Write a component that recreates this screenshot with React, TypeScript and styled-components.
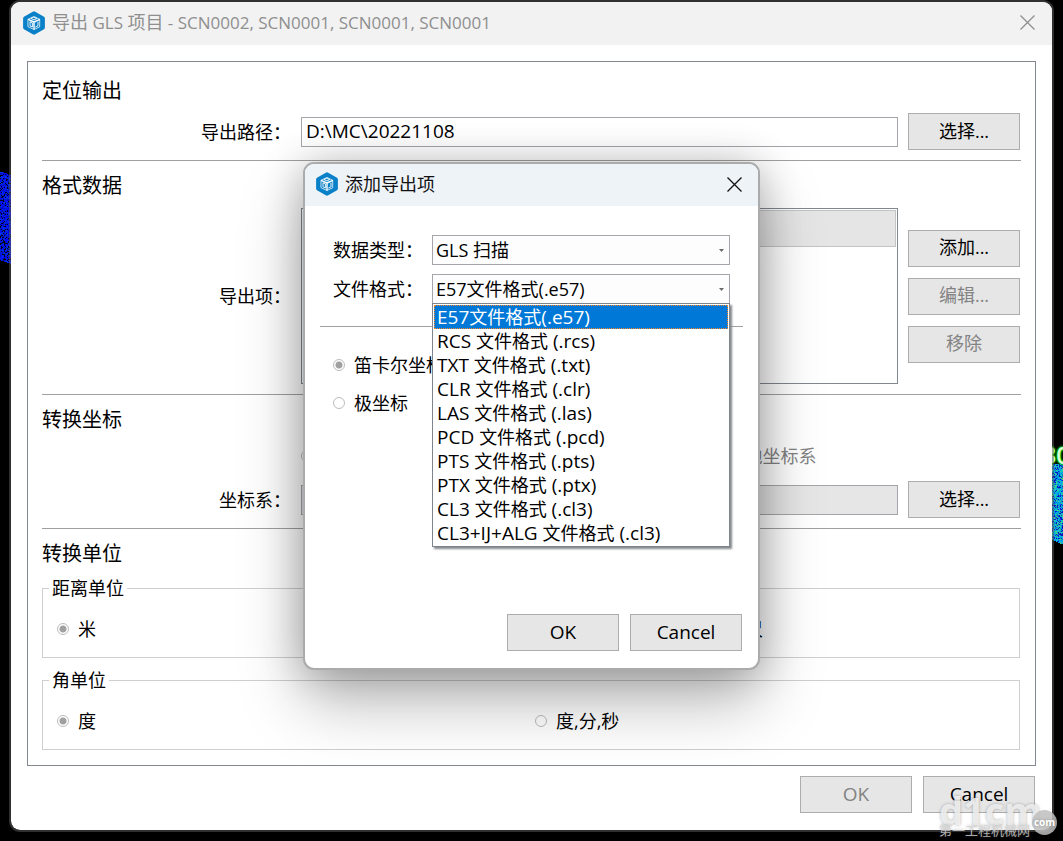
import React from "react";
import styled, { createGlobalStyle, css } from "styled-components";

const GlobalStyle = createGlobalStyle`
  *, *::before, *::after { box-sizing: border-box; }
  body {
    margin: 0;
    background: #000;
    color: #000;
    font-family: "Open Sans", "Noto Sans CJK SC", sans-serif;
    font-size: 18px;
    line-height: 28px;
  }
`;

/* ---------- text ---------- */

const Latin = styled.span<{ $small?: boolean }>`
  font-size: ${(p) => (p.$small ? 17 : 19)}px;
`;

/* Latin runs are set in their own size beside the Chinese characters. */
function Mixed({ text, small }: { text: string; small?: boolean }) {
  const runs = text.match(/[\x20-\x7e]+|[^\x20-\x7e]+/g) ?? [];
  return (
    <span>
      {runs.map((run, i) =>
        /^[\x20-\x7e]/.test(run) ? (
          <Latin key={i} $small={small}>
            {run}
          </Latin>
        ) : (
          run
        )
      )}
    </span>
  );
}

/* ---------- desktop ---------- */

const Desktop = styled.div`
  position: relative;
  min-height: 100vh;
  padding: 0 9px 9px;
  background: #000;
  overflow: hidden;
`;

const CloudStrip = styled.svg<{ $side: "left" | "right"; $top: number }>`
  position: absolute;
  top: ${(p) => p.$top}px;
  ${(p) => p.$side}: 0;
  display: block;
`;

const CloudLabel = styled.span`
  position: absolute;
  top: 441px;
  right: -7px;
  font-size: 24px;
  font-weight: 600;
  color: #d4ffd4;
  text-shadow: 0 0 2px #0d0, 0 0 2px #0d0, 0 0 3px #0d0;
`;

function PointCloud({
  side,
  top,
  height,
  colors,
  seed,
  slope,
}: {
  side: "left" | "right";
  top: number;
  height: number;
  colors: string[];
  seed: number;
  slope: number;
}) {
  const width = 11;
  const points: React.ReactNode[] = [];
  let s = seed;
  for (let y = 0; y < height; y++) {
    for (let x = 0; x < width; x++) {
      s = (s * 1103515245 + 12345) % 2147483648;
      const lean = Math.floor(x * slope);
      if (y < (side === "left" ? lean : 0) || y > height - 5 + lean) continue;
      const color = colors[Math.floor((s / 2147483648) * colors.length)];
      points.push(<rect key={`${x}-${y}`} x={x} y={y} width="1" height="1" fill={color} />);
    }
  }
  return (
    <CloudStrip
      $side={side}
      $top={top}
      width={width}
      height={height}
      shapeRendering="crispEdges"
      aria-hidden="true"
    >
      {points}
    </CloudStrip>
  );
}

const leftColors = ["#00f", "#0010e8", "#0018f0", "#0020ff", "#0028d0", "#0034e8", "#0000c8", "#000820", "#000410", "#0018b0"];
const rightColors = ["#00a8e0", "#0090e8", "#00c0d0", "#20c8b0", "#0060f0", "#0020d0", "#00b8f0", "#40d080", "#0098b8", "#1010b0"];

/* ---------- windows ---------- */

const Window = styled.main`
  position: relative;
  border: 2px solid rgba(96, 96, 96, 0.5);
  border-radius: 11px;
  background: #fff;
  background-clip: padding-box;
`;

const TitleBar = styled.header<{ $active?: boolean }>`
  display: flex;
  align-items: center;
  gap: 7px;
  height: ${(p) => (p.$active ? 42 : 43)}px;
  padding: 0 ${(p) => (p.$active ? 15 : 16)}px 2px ${(p) => (p.$active ? 11 : 12)}px;
  border-radius: 9px 9px 0 0;
  background: ${(p) => (p.$active ? "#eef3f8" : "#f2f2f2")};
  color: ${(p) => (p.$active ? "#111" : "#8f8f8f")};
`;

const Title = styled.h1`
  flex: 1;
  margin: 0;
  font-size: 18px;
  font-weight: 400;
  line-height: 28px;
  white-space: nowrap;
`;

const CloseButton = styled.button`
  display: flex;
  padding: 0;
  border: 0;
  background: none;
  color: inherit;
`;

const WindowBody = styled.div`
  padding: 16px 16px 17px;
`;

const Footer = styled.div`
  display: flex;
  justify-content: flex-end;
  gap: 11px;
  padding-right: 1px;
`;

const Panel = styled.div`
  margin-bottom: 10px;
  padding: 4px 14px 15px;
  border: 1px solid #828790;
`;

const Section = styled.section`
  padding: 10px 0;
  border-bottom: 1px solid #a0a0a0;

  &:last-child {
    padding-bottom: 0;
    border-bottom: 0;
  }
`;

const SectionTitle = styled.h2`
  margin: 0 0 7px;
  font-size: 20px;
  font-weight: 400;
  line-height: 30px;
`;

const FormRow = styled.div`
  display: grid;
  grid-template-columns: 249px 1fr 112px;
  align-items: center;
  column-gap: 10px;
  padding-right: 1px;
`;

const RowLabel = styled.label`
  text-align: right;
  white-space: nowrap;
`;

const ButtonColumn = styled.div`
  display: flex;
  flex-direction: column;
  gap: 11px;
`;

const PushButton = styled.button`
  width: 112px;
  height: 37px;
  padding: 0 0 2px;
  border: 1px solid #adadad;
  border-radius: 0;
  background: #e6e6e6;
  color: #000;
  font: inherit;

  &:disabled {
    color: #838383;
  }
`;

const TextBox = styled.input`
  width: 100%;
  min-width: 0;
  height: 30px;
  padding: 0 4px 2px;
  border: 1px solid #a5a5ab;
  border-radius: 0;
  background: #fff;
  color: #000;
  font-family: inherit;
  font-size: 19px;

  &:disabled {
    background: #e6e6e6;
  }
`;

const ExportList = styled.div`
  height: 176px;
  padding: 1px;
  border: 1px solid #828790;
`;

const ExportListHeader = styled.div`
  height: 37px;
  border: 1px solid #c4c4c4;
  background: #e5e5e5;
`;

/* ---------- choices ---------- */

const ChoiceGrid = styled.div<{ $columns: string; $offset?: boolean }>`
  display: grid;
  grid-template-columns: ${(p) => p.$columns};
  ${(p) =>
    p.$offset &&
    css`
      grid-column: 2 / 4;
      margin-bottom: 11px;
    `}
`;

const ChoiceLabel = styled.label<{ $dim?: boolean }>`
  display: flex;
  align-items: center;
  gap: 9px;
  line-height: 28px;
  white-space: nowrap;
  color: ${(p) => (p.$dim ? "#838383" : "#000")};
`;

const RadioInput = styled.input`
  appearance: none;
  flex: none;
  width: 12px;
  height: 12px;
  margin: 0;
  border: 1px solid #bcbcbc;
  border-radius: 50%;
  background: #fff;

  &:checked {
    background: radial-gradient(circle, #a0a0a0 0 3px, #fff 4px);
  }
`;

function Choice({
  name,
  label,
  checked,
  disabled,
}: {
  name: string;
  label: string;
  checked?: boolean;
  disabled?: boolean;
}) {
  return (
    <ChoiceLabel $dim={disabled}>
      <RadioInput type="radio" name={name} defaultChecked={checked} disabled={disabled} />
      {label}
    </ChoiceLabel>
  );
}

const Group = styled.fieldset`
  min-width: 0;
  margin: 0 1px 10px 0;
  padding: 0 6px 14px;
  border: 1px solid #cfcfcf;

  &:last-child {
    margin-bottom: 0;
  }

  & > div {
    padding: 15px 0 0 8px;
  }
`;

const GroupLegend = styled.legend`
  padding: 0 3px;
  line-height: 24px;
`;

/* ---------- dialog ---------- */

const DialogLayer = styled.div`
  position: absolute;
  inset: 0;
  display: flex;
  align-items: center;
  justify-content: center;
`;

const Dialog = styled.div`
  width: 457px;
  border: 2px solid #a9abad;
  border-radius: 11px;
  background: #fff;
  box-shadow: 0 32px 64px rgba(0, 0, 0, 0.28), 0 2px 40px rgba(0, 0, 0, 0.24);
`;

const DialogBody = styled.div`
  padding: 29px 15px 17px;
`;

const DialogForm = styled.div`
  display: grid;
  grid-template-columns: 99px 1fr;
  align-items: center;
  row-gap: 9px;
  padding: 0 13px 22px;
  border-bottom: 1px solid #a0a0a0;
`;

const DialogChoices = styled.div`
  display: flex;
  flex-direction: column;
  gap: 10px;
  min-height: 287px;
  padding: 24px 13px 0;
`;

const Combo = styled.div`
  position: relative;
  height: 30px;
`;

const ComboSelect = styled.select`
  appearance: none;
  width: 100%;
  height: 30px;
  padding: 0 24px 0 3px;
  border: 1px solid #a5a5ab;
  border-radius: 0;
  background: #fdfdfd;
  color: #000;
  font: inherit;
`;

const ComboArrow = styled.svg`
  position: absolute;
  top: 14px;
  right: 6px;
  pointer-events: none;
`;

const Popup = styled.ul`
  position: absolute;
  z-index: 1;
  top: 29px;
  left: 0;
  right: 0;
  margin: 0;
  padding: 1px;
  border: 1px solid #7f858c;
  background: #fff;
  box-shadow: 2px 2px 2px #84888c;
  list-style: none;
`;

const PopupItem = styled.li<{ $selected?: boolean }>`
  display: flex;
  align-items: center;
  height: 24px;
  padding: 0 2px;
  border: 1px dotted ${(p) => (p.$selected ? "#ff8728" : "transparent")};
  background: ${(p) => (p.$selected ? "#0078d7" : "#fff")};
  color: ${(p) => (p.$selected ? "#fff" : "#000")};
  white-space: nowrap;
`;

const formats = [
  "E57文件格式(.e57)",
  "RCS 文件格式 (.rcs)",
  "TXT 文件格式 (.txt)",
  "CLR 文件格式 (.clr)",
  "LAS 文件格式 (.las)",
  "PCD 文件格式 (.pcd)",
  "PTS 文件格式 (.pts)",
  "PTX 文件格式 (.ptx)",
  "CL3 文件格式 (.cl3)",
  "CL3+IJ+ALG 文件格式 (.cl3)",
];

/* ---------- icons ---------- */

function CubeIcon() {
  return (
    <svg width="22" height="24" viewBox="0 0 22 24" aria-hidden="true">
      <path
        d="M9.8.7a2.4 2.4 0 0 1 2.4 0l8.4 4.7A2.4 2.4 0 0 1 21.9 7.500v9a2.400 2.400 0 0 1-1.300 2.100l-8.400 4.700a2.400 2.400 0 0 1-2.400 0l-8.400-4.700A2.400 2.400 0 0 1 .1 16.500v-9a2.400 2.400 0 0 1 1.300-2.100z"
        fill="#0a80c8"
      />
      <g fill="none" stroke="#fff" strokeLinejoin="round" strokeLinecap="round">
        <path d="M5.300 8.200 11 5.500l5.700 2.700v7.600L11 18.500l-5.700-2.700z" strokeWidth="1" opacity=".75" />
        <path d="M5.600 8.600 11 11l5.400-2.400M11 11v7" strokeWidth="1.400" />
        <path d="m8.200 7.600 2.800 1.300 2.800-1.300L11 6.400zM7 11.200v3.600l2.400 1.200v-3.700zM15 11.200v3.600l-2.400 1.200" strokeWidth=".9" />
      </g>
    </svg>
  );
}

function CloseIcon() {
  return (
    <svg width="17" height="17" viewBox="0 0 17 17" aria-hidden="true">
      <path d="m1.500 1.500 14 14m0-14-14 14" fill="none" stroke="currentColor" strokeWidth="1.300" />
    </svg>
  );
}

function Arrow() {
  return (
    <ComboArrow width="5" height="3" viewBox="0 0 5 3" aria-hidden="true">
      <path d="M0 0h5L2.500 3z" fill="#6a6a6a" />
    </ComboArrow>
  );
}

/* ---------- watermark ---------- */

const Watermark = styled.div`
  position: absolute;
  right: 6px;
  bottom: 2px;
  width: 118px;
  color: rgba(245, 245, 245, 0.85);
  pointer-events: none;
  text-shadow: 0 0 3px rgba(90, 90, 90, 0.5);
`;

const WatermarkName = styled.div`
  font-size: 38px;
  font-weight: 700;
  line-height: 22px;
`;

const WatermarkSite = styled.div`
  font-size: 13px;
  line-height: 18px;
  white-space: nowrap;
  color: rgba(215, 215, 215, 0.8);
`;

const WatermarkDot = styled.span`
  position: absolute;
  right: 0;
  bottom: 4px;
  width: 25px;
  height: 25px;
  border-radius: 50%;
  background: rgba(190, 190, 190, 0.85);
  color: #fff;
  font-size: 10px;
  font-weight: 700;
  line-height: 24px;
  text-align: center;
`;

export default function App() {
  return (
    <>
      <GlobalStyle />
      <Desktop>
        <PointCloud side="left" top={172} height={93} colors={leftColors} seed={7} slope={0.3} />
        <PointCloud side="right" top={464} height={80} colors={rightColors} seed={21} slope={0.5} />
        <CloudLabel aria-hidden="true">30</CloudLabel>

        <Window>
          <TitleBar>
            <CubeIcon />
            <Title>
              <Mixed small text="导出 GLS 项目 - SCN0002, SCN0001, SCN0001, SCN0001" />
            </Title>
            <CloseButton type="button" aria-label="关闭">
              <CloseIcon />
            </CloseButton>
          </TitleBar>

          <WindowBody>
            <Panel>
              <Section>
                <SectionTitle>定位输出</SectionTitle>
                <FormRow>
                  <RowLabel htmlFor="export-path">导出路径：</RowLabel>
                  <TextBox id="export-path" defaultValue={"D:\\MC\\20221108"} />
                  <PushButton type="button">选择...</PushButton>
                </FormRow>
              </Section>

              <Section>
                <SectionTitle>格式数据</SectionTitle>
                <FormRow>
                  <RowLabel as="span" id="export-items">
                    导出项：
                  </RowLabel>
                  <ExportList role="group" aria-labelledby="export-items">
                    <ExportListHeader />
                  </ExportList>
                  <ButtonColumn>
                    <PushButton type="button">添加...</PushButton>
                    <PushButton type="button" disabled>
                      编辑...
                    </PushButton>
                    <PushButton type="button" disabled>
                      移除
                    </PushButton>
                  </ButtonColumn>
                </FormRow>
              </Section>

              <Section>
                <SectionTitle>转换坐标</SectionTitle>
                <FormRow>
                  <ChoiceGrid $columns="9fr 7fr" $offset>
                    <Choice name="coords" label="地图坐标系" disabled />
                    <Choice name="coords" label="本地坐标系" disabled />
                  </ChoiceGrid>
                  <RowLabel htmlFor="coord-system">坐标系：</RowLabel>
                  <TextBox id="coord-system" disabled />
                  <PushButton type="button">选择...</PushButton>
                </FormRow>
              </Section>

              <Section>
                <SectionTitle>转换单位</SectionTitle>
                <Group>
                  <GroupLegend>距离单位</GroupLegend>
                  <ChoiceGrid $columns="33fr 33fr 34fr">
                    <Choice name="distance" label="米" checked />
                    <Choice name="distance" label="英尺" />
                    <Choice name="distance" label="美英尺" />
                  </ChoiceGrid>
                </Group>
                <Group>
                  <GroupLegend>角单位</GroupLegend>
                  <ChoiceGrid $columns="1fr 1fr">
                    <Choice name="angle" label="度" checked />
                    <Choice name="angle" label="度,分,秒" />
                  </ChoiceGrid>
                </Group>
              </Section>
            </Panel>

            <Footer>
              <PushButton type="button" disabled>
                <Latin>OK</Latin>
              </PushButton>
              <PushButton type="button">
                <Latin>Cancel</Latin>
              </PushButton>
            </Footer>
          </WindowBody>

          <DialogLayer>
            <Dialog role="dialog" aria-labelledby="dialog-title">
              <TitleBar $active>
                <CubeIcon />
                <Title as="h2" id="dialog-title">
                  添加导出项
                </Title>
                <CloseButton type="button" aria-label="关闭">
                  <CloseIcon />
                </CloseButton>
              </TitleBar>
              <DialogBody>
                <DialogForm>
                  <label htmlFor="data-type">数据类型：</label>
                  <Combo>
                    <ComboSelect id="data-type" defaultValue="GLS 扫描">
                      <option>GLS 扫描</option>
                    </ComboSelect>
                    <Arrow />
                  </Combo>
                  <label htmlFor="file-format">文件格式：</label>
                  <Combo>
                    <ComboSelect id="file-format" defaultValue={formats[0]}>
                      {formats.map((f) => (
                        <option key={f}>{f}</option>
                      ))}
                    </ComboSelect>
                    <Arrow />
                    <Popup role="listbox" aria-label="文件格式">
                      {formats.map((f, i) => (
                        <PopupItem key={f} role="option" aria-selected={i === 0} $selected={i === 0}>
                          <Mixed text={f} />
                        </PopupItem>
                      ))}
                    </Popup>
                  </Combo>
                </DialogForm>
                <DialogChoices>
                  <Choice name="projection" label="笛卡尔坐标" checked />
                  <Choice name="projection" label="极坐标" />
                </DialogChoices>
                <Footer>
                  <PushButton type="button">
                    <Latin>OK</Latin>
                  </PushButton>
                  <PushButton type="button">
                    <Latin>Cancel</Latin>
                  </PushButton>
                </Footer>
              </DialogBody>
            </Dialog>
          </DialogLayer>
        </Window>

        <Watermark aria-hidden="true">
          <WatermarkName>d1cm</WatermarkName>
          <WatermarkSite>第一工程机械网</WatermarkSite>
          <WatermarkDot>com</WatermarkDot>
        </Watermark>
      </Desktop>
    </>
  );
}
